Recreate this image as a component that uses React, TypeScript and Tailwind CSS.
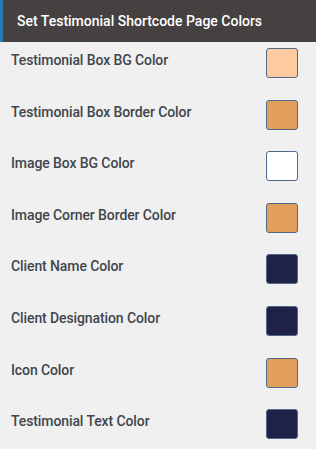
import React from "react";

const rows: { label: string; color: string }[] = [
  { label: "Testimonial Box BG Color", color: "#fdcb9f" },
  { label: "Testimonial Box Border Color", color: "#e39e5b" },
  { label: "Image Box BG Color", color: "#ffffff" },
  { label: "Image Corner Border Color", color: "#e39e5b" },
  { label: "Client Name Color", color: "#1f2149" },
  { label: "Client Designation Color", color: "#1f2149" },
  { label: "Icon Color", color: "#e39e5b" },
  { label: "Testimonial Text Color", color: "#1f2149" },
];

export default function App() {
  return (
    <div
      className="w-[316px] h-[449px] bg-[#f0f0f0] overflow-hidden"
      style={{ fontFamily: "Roboto, 'Liberation Sans', sans-serif" }}
    >
      <div className="h-[42px] bg-[#454141] border-l-[3px] border-[#2a78b6] flex items-center pl-[14px]">
        <span className="text-white text-[14px] font-medium">
          Set Testimonial Shortcode Page Colors
        </span>
      </div>
      <div className="pt-[6px]">
        {rows.map((r) => (
          <div key={r.label} className="h-[51.6px] flex items-start pl-[11px] pr-[18px]">
            <span className="flex-1 text-[14px] font-medium text-[#40464d] mt-[2px] tracking-[-0.1px]">
              {r.label}
            </span>
            <span
              className="w-[32px] h-[30px] rounded-[3px] border border-[#50698a]"
              style={{ backgroundColor: r.color }}
            />
          </div>
        ))}
      </div>
    </div>
  );
}
